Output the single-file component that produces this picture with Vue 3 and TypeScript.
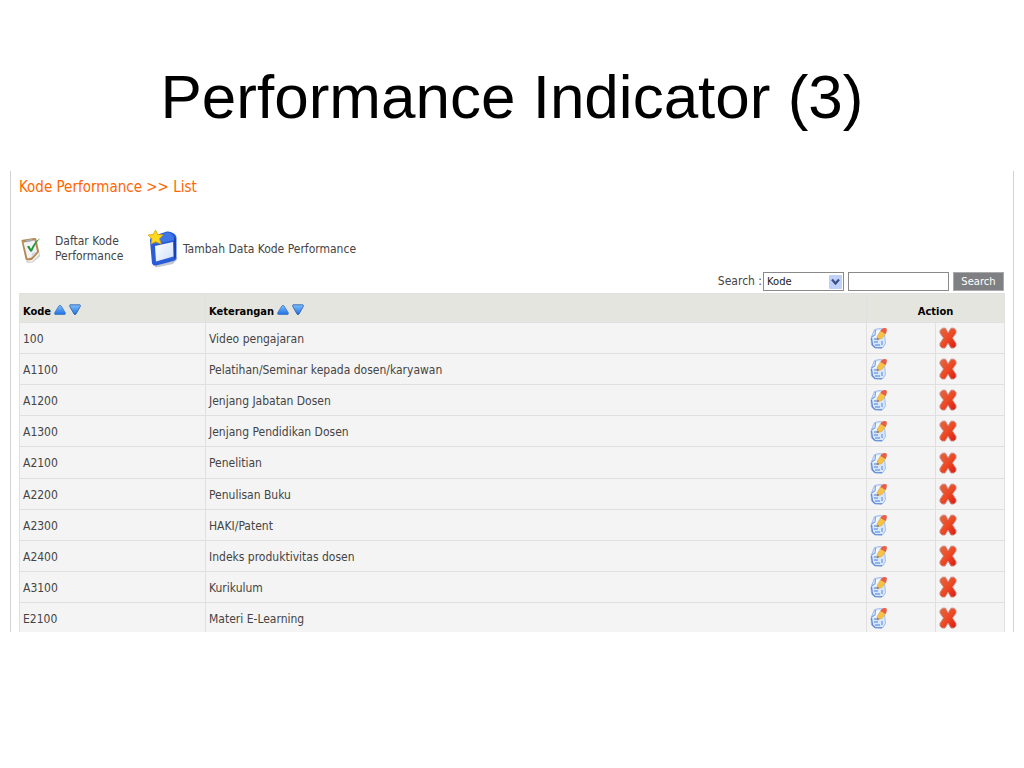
<script setup lang="ts">
import { ref } from 'vue'

interface Indicator {
  code: string
  description: string
}

const indicators: Indicator[] = [
  { code: '100', description: 'Video pengajaran' },
  { code: 'A1100', description: 'Pelatihan/Seminar kepada dosen/karyawan' },
  { code: 'A1200', description: 'Jenjang Jabatan Dosen' },
  { code: 'A1300', description: 'Jenjang Pendidikan Dosen' },
  { code: 'A2100', description: 'Penelitian' },
  { code: 'A2200', description: 'Penulisan Buku' },
  { code: 'A2300', description: 'HAKI/Patent' },
  { code: 'A2400', description: 'Indeks produktivitas dosen' },
  { code: 'A3100', description: 'Kurikulum' },
  { code: 'E2100', description: 'Materi E-Learning' },
]

const columns: string[] = ['Kode', 'Keterangan']
const field = ref<string>('Kode')
const query = ref<string>('')
</script>

<template>
  <main class="slide">
    <svg class="defs" aria-hidden="true">
      <defs>
        <linearGradient id="blueArrow" x1="0" y1="0" x2="0" y2="1">
          <stop offset="0" stop-color="#7fc0ff" />
          <stop offset="1" stop-color="#1f6fe0" />
        </linearGradient>
        <linearGradient id="redCross" x1="0" y1="0" x2="1" y2="1">
          <stop offset="0" stop-color="#dd6844" />
          <stop offset="0.5" stop-color="#ee4a24" />
          <stop offset="1" stop-color="#d81a14" />
        </linearGradient>
        <linearGradient id="sheet" x1="0" y1="0" x2="1" y2="1">
          <stop offset="0" stop-color="#ffffff" />
          <stop offset="1" stop-color="#cfe0fa" />
        </linearGradient>
      </defs>
    </svg>

    <h1 class="slide-title">Performance Indicator (3)</h1>

    <section class="panel">
      <h2 class="heading">Kode Performance &gt;&gt; List</h2>

      <nav class="toolbar">
        <a href="#list" class="tool tool-list">
          <svg width="22" height="28" viewBox="0 0 22 28" aria-hidden="true">
            <path d="M5 26l6 .500 7-7v-2l1 1v3l-7 6-6 .500z" fill="#d4d4d4" />
            <path d="M.500 6Q.300 5 1.500 4.800L13 3q2-.200 2.400 1.200L18 16q.2 1-.6 2L11 25l-4.500.600q-1.500 0-2-1.500z" fill="#b58a55" />
            <path d="M2.500 7.500L13.500 5.200 16 16.500l-5.500 6-4 1z" fill="#f1f3f8" />
            <path d="M5 5l6-1 .6 2-6 1.200z" fill="#a9adb4" />
            <path d="M10.500 22.500l.6-4.500 4.900-1.500z" fill="#d3d7df" />
            <path d="M6 11.500l2.200-.8 1.800 3.300C12 9.500 15 5.500 19.500 3c-4 4-6 8-8.500 13.500l-1.600.3z" fill="#25953a" />
          </svg>
          <span class="two-line">Daftar Kode Performance</span>
        </a>
        <a href="#add" class="tool">
          <svg width="30" height="38" viewBox="0 0 30 38" aria-hidden="true">
            <path d="M5 35l20-4 4-4 .500 2-4.500 5-17 3.500z" fill="#c3c7cf" />
            <path d="M2 11Q2 7 5 6L19 1.500q3-.5 6 1.500 3.500 2 3.500 5v20q0 2-3 3L8 35.500q-3 .5-4-2z" fill="#2a5cd8" />
            <path d="M7 7l12-4.500q4 0 6 3.500l1 4L6 14z" fill="#3f78e6" />
            <path d="M26 7l2 2v18l-2 2z" fill="#1a3fae" />
            <path d="M7 16l18-4 .5 14.500L8 31.500z" fill="url(#sheet)" />
            <path d="M7.500 0l2.300 4.600 5.200.3-3.600 3.800 1.700 5.300-5.400-2.300L3 14l.9-5.300L0 5l5.200-.6z" fill="#ffd91c" stroke="#d9a30b" stroke-width="0.8" />
          </svg>
          <span>Tambah Data Kode Performance</span>
        </a>
      </nav>

      <form class="search" @submit.prevent>
        <label for="field">Search :</label>
        <span class="select-box">
          <select id="field" v-model="field">
            <option>Kode</option>
            <option>Keterangan</option>
          </select>
          <svg class="chevron" width="13" height="14" viewBox="0 0 13 14" aria-hidden="true">
            <rect width="13" height="14" rx="1" fill="#bfd0fa" />
            <path d="M3 4.500l3.500 4 3.500-4" fill="none" stroke="#3a4f86" stroke-width="2.200" />
          </svg>
        </span>
        <input v-model="query" type="text" aria-label="Kata kunci" />
        <button type="submit">Search</button>
      </form>

      <table>
        <colgroup>
          <col class="col-code" />
          <col />
          <col class="col-action" />
          <col class="col-action" />
        </colgroup>
        <thead>
          <tr>
            <th v-for="name in columns" :key="name" scope="col">
              <span class="sortable">
                {{ name }}
                <button type="button" class="icon-button" :aria-label="name + ' naik'">
                  <svg width="12" height="15" viewBox="0 0 12 15">
                    <path d="M1 10.500Q0 10 .8 8.500L4.800 2Q6 .3 7.200 2l4 6.500q.8 1.500-.3 2z" fill="url(#blueArrow)" stroke="#3a6fbe" stroke-width="0.7" />
                  </svg>
                </button>
                <button type="button" class="icon-button" :aria-label="name + ' turun'">
                  <svg width="12" height="15" viewBox="0 0 12 15">
                    <path d="M1 .8Q0 1.400.8 2.600l4.200 7.400q1 1.400 2 0l4.200-7.400q.8-1.200-.3-1.800z" fill="url(#blueArrow)" stroke="#2458a8" stroke-width="0.8" />
                  </svg>
                </button>
              </span>
            </th>
            <th colspan="2" scope="colgroup" class="action-head">Action</th>
          </tr>
        </thead>
        <tbody>
          <tr v-for="item in indicators" :key="item.code">
            <td>{{ item.code }}</td>
            <td>{{ item.description }}</td>
            <td class="action">
              <button type="button" class="icon-button" :aria-label="'Ubah ' + item.code">
                <svg width="18" height="22" viewBox="0 0 18 22">
                  <path d="M4.500 2.500L10 1.500l4 1 1.500 14-2.500 4-8 .5-3.500-3L1 11z" fill="#d9e7fc" stroke="#8fb0ea" stroke-width="0.800" />
                  <path d="M5 4l5-1-4 7-3 1z" fill="#f6faff" />
                  <path d="M1.500 10l3.500-2L5.500 3" fill="none" stroke="#7ba1e2" stroke-width="1.200" />
                  <path d="M4 12h3M4 15h4M5 18h5M12 14v4" stroke="#7aa2e6" stroke-width="1.400" />
                  <path d="M1.500 11l1 7 2.500 2.500 7 .3" fill="none" stroke="#5b86d2" stroke-width="1.200" />
                  <path d="M7 13l.5-4L11 3.500l5 2.500-4 5.500z" fill="#f8c246" stroke="#dfa03a" stroke-width="0.500" />
                  <path d="M10.500 4Q11.500 1 14.500 1t2.300 2q.2 2-1.300 4z" fill="#e5604a" />
                  <path d="M7 13l.4-2.200 2 1.200z" fill="#77706e" />
                </svg>
              </button>
            </td>
            <td class="action">
              <button type="button" class="icon-button" :aria-label="'Hapus ' + item.code">
                <svg width="18" height="22" viewBox="0 0 18 22">
                  <path d="M1 3.500L3.500 1.200h3L9 6l3-4.800h3l2 2.300v2.500L13.500 11l3.500 5.500v2.500L15 21h-3L9 16l-3 5H3L1 19v-2.500L4.500 11 1 6z" fill="url(#redCross)" stroke="#d08a80" stroke-width="1" />
                </svg>
              </button>
            </td>
          </tr>
        </tbody>
      </table>
    </section>
  </main>
</template>

<style>
body {
  margin: 0;
  background: #fff;
}
</style>

<style scoped>
.slide {
  padding: 57px 10px 0;
  font-family: "DejaVu Sans Condensed", "DejaVu Sans", sans-serif;
  font-size: 12px;
  line-height: 15px;
  color: #444;
}

.defs {
  position: absolute;
  width: 0;
  height: 0;
}

.slide-title {
  margin: 0 0 34px;
  font: 62px/80px "Liberation Sans", Arial, sans-serif;
  color: #000;
  text-align: center;
}

.panel {
  padding: 3px 8px 0;
  border: solid #d2d2d2;
  border-width: 0 1px;
}

.heading {
  margin: 0;
  font: 15px/26px "DejaVu Sans Condensed", "DejaVu Sans", sans-serif;
  color: #f60;
}

.toolbar {
  display: flex;
  align-items: center;
  gap: 23px;
  height: 40px;
  margin-top: 29px;
}

.tool {
  display: flex;
  align-items: center;
  gap: 5px;
  color: inherit;
  text-decoration: none;
}

.tool-list {
  gap: 12px;
  padding-left: 2px;
}

.two-line {
  width: 70px;
}

.search {
  display: flex;
  justify-content: flex-end;
  align-items: center;
  gap: 4px;
  margin: 3px 1px 2px 0;
}

.search label {
  margin-right: -3px;
}

.select-box {
  display: grid;
  align-items: center;
}

.select-box > * {
  grid-area: 1 / 1;
}

.chevron {
  justify-self: end;
  margin-right: 2px;
  pointer-events: none;
}

select,
input,
.search button {
  box-sizing: border-box;
  height: 19px;
  margin: 0;
  padding: 0 3px;
  border: 1px solid #8a8a8a;
  border-radius: 0;
  background: #fff;
  font: 10px/15px "DejaVu Sans", sans-serif;
  color: #222;
}

select {
  width: 81px;
  appearance: none;
}

input {
  width: 101px;
}

.search button {
  width: 51px;
  border-color: #aaa;
  background: #7f8084;
  color: #fff;
}

table {
  width: 100%;
  table-layout: fixed;
  border-collapse: collapse;
}

.col-code {
  width: 186px;
}

.col-action {
  width: 69px;
}

th,
td {
  box-sizing: border-box;
  height: 31px;
  padding: 0 3px;
  border: 1px solid #e0e0e0;
  text-align: left;
}

th {
  height: 29px;
  padding-top: 7px;
  background: #e4e5df;
  font: bold 11px/15px "DejaVu Sans Condensed", "DejaVu Sans", sans-serif;
  color: #000;
}

td {
  padding-top: 2px;
  background: #f4f4f4;
}

td.action {
  padding-top: 0;
}

th.action-head {
  text-align: center;
}

tbody tr:nth-child(5n) td {
  height: 32px;
}

tbody tr:last-child td {
  height: 29px;
  padding-top: 4px;
  border-bottom: 0;
}

tbody tr:last-child td.action {
  padding-top: 2px;
}

.sortable {
  display: flex;
  align-items: center;
  gap: 3px;
}

.icon-button {
  display: block;
  padding: 0;
  border: 0;
  background: none;
}

.icon-button svg {
  display: block;
}
</style>
